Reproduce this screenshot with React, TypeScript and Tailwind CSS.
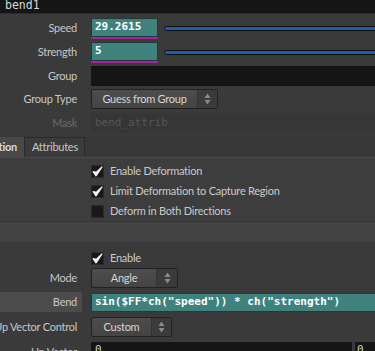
import React from "react";

const sans = "font-['Lato','Noto_Sans',sans-serif] tracking-[-0.25px]";
const mono = "font-['DejaVu_Sans_Mono','Liberation_Mono',monospace] tracking-normal";

function Label({ text, hl }: { text: string; hl?: boolean }) {
  return (
    <div
      className={`w-[82px] shrink-0 h-full flex items-center justify-end pr-[5px] whitespace-nowrap text-[11px] text-[#c8c8c8] ${sans} ${
        hl ? "bg-[#4b4b4b]" : ""
      }`}
    >
      {text}
    </div>
  );
}

function Arrows() {
  return (
    <svg width="7" height="12" viewBox="0 0 7 12">
      <path d="M3.5 0.5 L6.5 5 L0.5 5 Z" fill="#8a8a8a" />
      <path d="M3.5 11.5 L6.5 7 L0.5 7 Z" fill="#8a8a8a" />
    </svg>
  );
}

function Dropdown({ text, w, aw }: { text: string; w: number; aw: number }) {
  return (
    <div
      className="flex h-[20px] rounded-[2px] border border-[#222] bg-gradient-to-b from-[#4d4d4d] to-[#444] overflow-hidden"
      style={{ width: w }}
    >
      <div className={`flex-1 flex items-center justify-center text-[11px] text-[#d6d6d6] ${sans}`}>{text}</div>
      <div className="h-full flex items-center justify-center bg-[#3b3b3b] border-l border-[#333]" style={{ width: aw }}>
        <Arrows />
      </div>
    </div>
  );
}

function Check({ on }: { on: boolean }) {
  return (
    <div className="w-[13px] h-[13px] bg-[#191919] border border-[#2b2b2b] flex items-center justify-center">
      {on && (
        <svg width="11" height="11" viewBox="0 0 11 11">
          <path d="M1.2 5.6 L4 9.8 L10 1 L4.2 6.4 Z" fill="#f2f2f2" stroke="#f2f2f2" strokeWidth="1.3" strokeLinejoin="round" />
        </svg>
      )}
    </div>
  );
}

function CheckRow({ on, text, h = 20 }: { on: boolean; text: string; h?: number }) {
  return (
    <div className="flex items-center" style={{ height: h }}>
      <div className="w-[91px] shrink-0" />
      <Check on={on} />
      <div className={`ml-[6px] text-[11px] text-[#cacaca] whitespace-nowrap ${sans}`}>{text}</div>
    </div>
  );
}

function NumField({ value }: { value: string }) {
  return (
    <div className="w-[67px] shrink-0 flex flex-col">
      <div className={`h-[19px] border border-[#243a39] bg-[#3f827d] flex items-center pl-[3px] text-[11px] font-bold text-white ${mono}`}>
        {value}
      </div>
      <div className="h-[2px] bg-[#a8239f]" />
    </div>
  );
}

function Slider() {
  return (
    <div className="flex-1 ml-[6px] h-[5px] rounded-l-full bg-[#1d5db0] border border-[#0f0f0f] -mr-[4px]" />
  );
}

export default function App() {
  return (
    <div className={`w-[375px] h-[351px] overflow-hidden bg-[#3a3a3a] ${sans}`}>
      {/* top bar */}
      <div className="h-[13px] bg-[#151515] border-b border-[#2c2c2c] box-content overflow-hidden pl-[5px]">
        <div className={`-mt-[1px] leading-[13px] text-[11.5px] text-[#d8d8d8] ${mono}`}>bend1</div>
      </div>

      <div className="pt-[4px]">
        {/* Speed */}
        <div className="flex items-center h-[21px]">
          <Label text="Speed" />
          <div className="ml-[9px]" />
          <NumField value="29.2615" />
          <Slider />
        </div>
        {/* Strength */}
        <div className="flex items-center h-[21px] mt-[3px]">
          <Label text="Strength" />
          <div className="ml-[9px]" />
          <NumField value="5" />
          <Slider />
        </div>
        {/* Group */}
        <div className="flex items-center h-[20px] mt-[3px]">
          <Label text="Group" />
          <div className="ml-[9px] flex-1 h-[20px] bg-[#151515] border-t border-[#101010]" />
        </div>
        {/* Group Type */}
        <div className="flex items-center h-[20px] mt-[3px]">
          <Label text="Group Type" />
          <div className="ml-[9px]" />
          <Dropdown text="Guess from Group" w={127} aw={20} />
        </div>
      </div>
      {/* Mask */}
      <div className="flex items-center h-[20px] mt-[4px] bg-[#363636]">
        <div className="w-[82px] shrink-0 h-full bg-[#3a3a3a] flex items-center justify-end pr-[5px] text-[11px] text-[#6a6a6a]">
          Mask
        </div>
        <div className="w-[9px] h-full bg-[#3a3a3a]" />
        <div className={`flex-1 h-full flex items-center pl-[4px] text-[11px] text-[#575757] ${mono}`}>bend_attrib</div>
      </div>

      {/* tabs */}
      <div className="h-[4px]" />
      <div className="flex h-[20px] bg-[#383838]">
        <div className="w-[24px] h-full bg-[#484848] flex items-center justify-end pr-[7px] whitespace-nowrap text-[11px] font-bold text-[#dadada]">
          Deformation
        </div>
        <div className="w-[61px] h-full bg-[#3b3b3b] border border-[#2b2b2b] border-b-0 flex items-center pl-[7px] text-[11px] text-[#c8c8c8]">
          Attributes
        </div>
      </div>
      <div className="bg-[#3d3d3d] border-t border-[#4a4a4a] pt-[3px]">
        <CheckRow on text="Enable Deformation" />
        <CheckRow on text="Limit Deformation to Capture Region" />
        <CheckRow on={false} text="Deform in Both Directions" />
      </div>
      {/* band */}
      <div className="h-[21px] bg-[#434343] border-t border-[#333]" />

      <div className="h-[7px]" />
      <CheckRow on text="Enable" h={19} />
      {/* Mode */}
      <div className="flex items-center h-[20px]">
        <Label text="Mode" />
        <div className="ml-[9px]" />
        <Dropdown text="Angle" w={87} aw={21} />
      </div>
      {/* Bend */}
      <div className="flex items-center h-[20px] mt-[4px]">
        <Label text="Bend" hl />
        <div className="ml-[9px]" />
        <div
          className={`flex-1 h-[19px] border border-[#243a39] border-r-0 bg-[#3f827d] flex items-center pl-[3px] whitespace-nowrap text-[11px] font-bold text-white ${mono}`}
        >
          sin($FF*ch("speed")) * ch("strength")
        </div>
      </div>
      {/* Up Vector Control */}
      <div className="flex items-center h-[20px] mt-[5px]">
        <Label text="Up Vector Control" />
        <div className="ml-[9px]" />
        <Dropdown text="Custom" w={81} aw={20} />
      </div>
      {/* Up Vector */}
      <div className="flex items-start h-[20px] mt-[5px]">
        <Label text="Up Vector" />
        <div className="ml-[9px]" />
        <div className={`w-[261px] h-[20px] bg-[#151515] pl-[4px] text-[11px] text-[#d0d0d0] ${mono}`}>0</div>
        <div className={`ml-[3px] flex-1 h-[20px] bg-[#151515] pl-[2px] text-[11px] text-[#d0d0d0] ${mono}`}>0</div>
      </div>
    </div>
  );
}
